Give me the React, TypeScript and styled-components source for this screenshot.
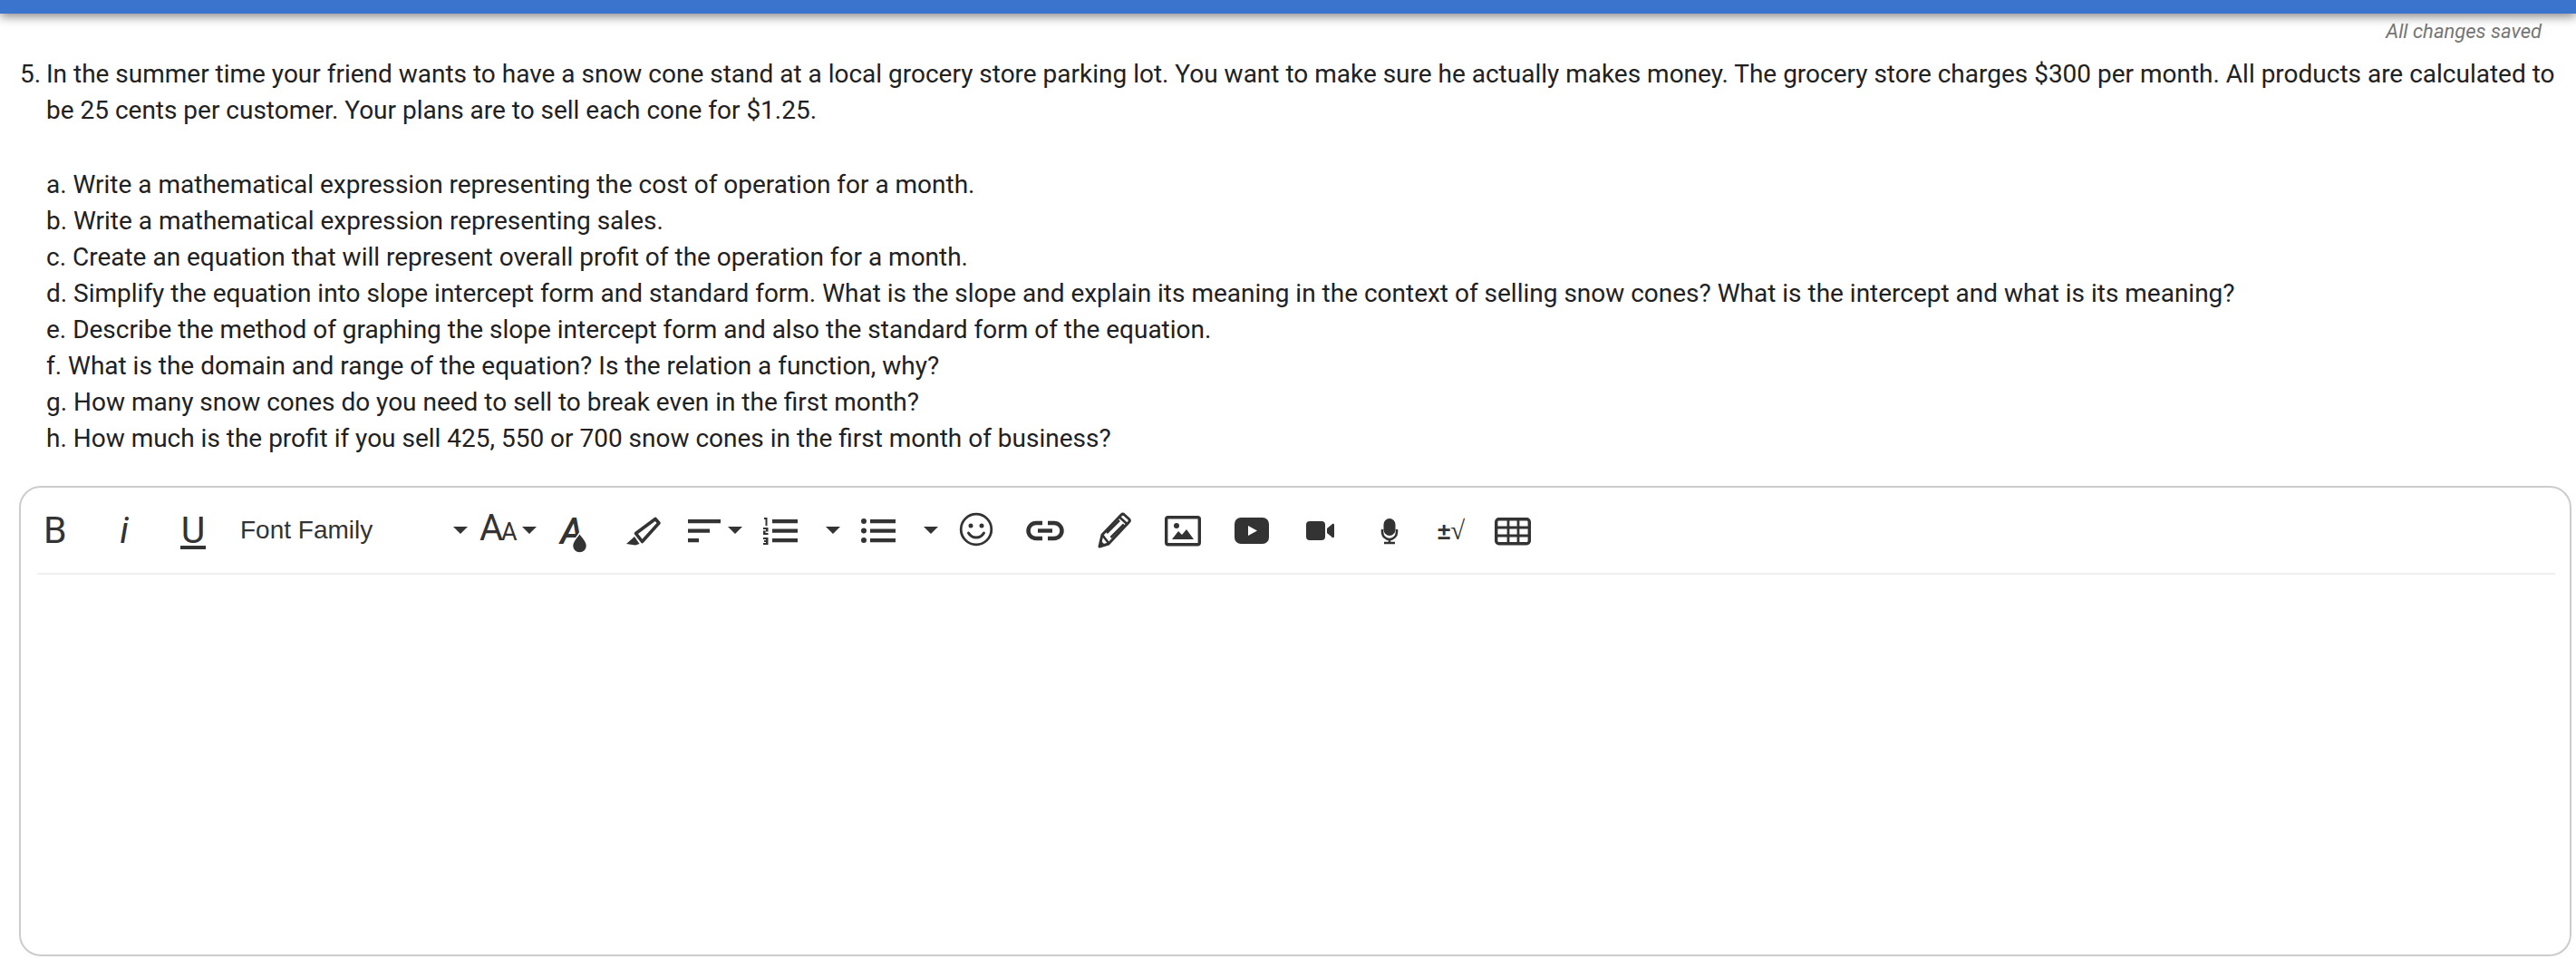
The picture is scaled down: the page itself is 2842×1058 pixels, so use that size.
import React from "react";
import styled, { createGlobalStyle } from "styled-components";

const Global = createGlobalStyle`
  html, body { margin: 0; padding: 0; background: #fff; }
  body { font-family: Roboto, "Liberation Sans", sans-serif; color: #212121; overflow: hidden; }
`;
const Page = styled.div`width: 2842px; height: 1058px; display: flex; flex-direction: column;`;
const TopBar = styled.div`height: 15px; background: #3a74cc; box-shadow: 0 3px 12px rgba(0,0,0,.5); flex: none;`;
const Status = styled.div`
  height: 38px; padding-right: 38px; display: flex; align-items: center; justify-content: flex-end;
  font-size: 22px; font-style: italic; color: #757575;
`;
const Question = styled.div`display: flex; padding-left: 22px; font-size: 27.99px; line-height: 40px; color: #212121; margin-top: 9px;`;
const Num = styled.div`width: 29px; flex: none;`;
const Body = styled.div`width: 2780px;`;
const Para = styled.div`margin-bottom: 42px;`;
const Part = styled.div``;
const Editor = styled.div`
  margin: 32px 5px 0 21px; height: 519px; box-sizing: border-box; flex: none;
  border: 2px solid #ccc; border-radius: 24px; background: #fff;
`;
const Toolbar = styled.div`
  margin: 0 16px 0 18px; height: 96px; box-sizing: border-box; border-bottom: 2px solid #efefef;
  display: flex; align-items: center;
`;
const Tool = styled.div<{ $w: number; $pad?: number; $gap?: number }>`
  width: ${p => p.$w}px; padding-left: ${p => p.$pad ?? 0}px; box-sizing: border-box; flex: none;
  height: 60px; display: flex; align-items: center; gap: ${p => p.$gap ?? 0}px;
  justify-content: ${p => (p.$pad === undefined ? "center" : "flex-start")};
  color: #333;
`;
const Glyph = styled.span<{ $italic?: boolean; $under?: boolean }>`
  position: relative;
  font: ${p => (p.$italic ? "italic" : "normal")} 400 41px/40px Roboto, sans-serif;
  color: #333;
  ${p => p.$under ? `&::after { content: ""; position: absolute; left: -1px; right: -1px; top: 37px; height: 4px; background: #333; }` : ""}
`;
const FontLabel = styled.span`font: 400 28px/40px "Liberation Sans", sans-serif; color: #333; width: 235px; flex: none;`;
const Arrow = styled.span`
  width: 0; height: 0; flex: none; border-left: 8px solid transparent; border-right: 8px solid transparent;
  border-top: 8px solid #333;
`;
const AA = styled.span`display: flex; align-items: baseline; width: 40px; color: #333; font-family: Roboto, sans-serif; line-height: 40px; font-weight: 400;`;
const BigA = styled.span`font-size: 40px; letter-spacing: -2px;`;
const SmallA = styled.span`font-size: 27px; letter-spacing: -1px;`;
const MathSign = styled.span`display: flex; align-items: baseline; color: #333; line-height: 40px;`;
const Pm = styled.span`font: 700 26px/40px "Liberation Sans", sans-serif;`;
const Root = styled.span`font: 400 29px/40px "Liberation Serif", serif;`;
const Svg = styled.svg`width: 40px; height: 40px; flex: none; display: block; overflow: visible; margin-bottom: 4px;`;

const c = "#333";
const Icon: React.FC<{ children: React.ReactNode }> = ({ children }) => (
  <Svg viewBox="0 0 40 40" fill="none">{children}</Svg>
);

const parts = [
  "a. Write a mathematical expression representing the cost of operation for a month.",
  "b. Write a mathematical expression representing sales.",
  "c. Create an equation that will represent overall profit of the operation for a month.",
  "d. Simplify the equation into slope intercept form and standard form. What is the slope and explain its meaning in the context of selling snow cones? What is the intercept and what is its meaning?",
  "e. Describe the method of graphing the slope intercept form and also the standard form of the equation.",
  "f. What is the domain and range of the equation? Is the relation a function, why?",
  "g. How many snow cones do you need to sell to break even in the first month?",
  "h. How much is the profit if you sell 425, 550 or 700 snow cones in the first month of business?",
];

export default function App() {
  return (
    <Page>
      <Global />
      <TopBar />
      <Status>All changes saved</Status>
      <Question>
        <Num>5.</Num>
        <Body>
          <Para>
            In the summer time your friend wants to have a snow cone stand at a local grocery store parking lot. You want to make sure he actually makes money. The grocery store charges $300 per month. All products are calculated to be 25 cents per customer. Your plans are to sell each cone for $1.25.
          </Para>
          {parts.map(t => <Part key={t}>{t}</Part>)}
        </Body>
      </Question>
      <Editor>
        <Toolbar>
          <Tool $w={58} $pad={7}><Glyph>B</Glyph></Tool>
          <Tool $w={76}><Glyph $italic>i</Glyph></Tool>
          <Tool $w={76}><Glyph $under>U</Glyph></Tool>
          <Tool $w={266} $pad={14}><FontLabel>Font Family</FontLabel><Arrow /></Tool>
          <Tool $w={80} $pad={12} $gap={7}><AA><BigA>A</BigA><SmallA>A</SmallA></AA><Arrow /></Tool>
          <Tool $w={74}>
            <Icon>
              <text x="4" y="37" fontFamily="Roboto, sans-serif" fontStyle="italic" fontWeight="500" fontSize="40" fill={c}>A</text>
              <path d="M25.500 25c3 5 8 9 8 14a8 8 0 0 1-16 0c0-5 5-9 8-14z" fill={c} stroke="#fff" strokeWidth="1.500" />
            </Icon>
          </Tool>
          <Tool $w={76}>
            <Icon>
              <path d="M34 9.500l4 4.500-18.500 20.500-7-9z" stroke={c} strokeWidth="3.600" strokeLinejoin="round" />
              <path d="M2 37l9-8 5.500 8-4.500 1.500z" fill={c} />
            </Icon>
          </Tool>
          <Tool $w={83} $pad={10} $gap={6}>
            <Icon>
              <path d="M2 10h36v4.300H2zM2 20.500h24v4.300H2zM2 31h12v4.300H2z" fill={c} />
            </Icon>
            <Arrow />
          </Tool>
          <Tool $w={108} $pad={11} $gap={30}>
            <Icon>
              <path d="M11 10h28v4.300H11zM11 20.500h28v4.300H11zM11 31h28v4.300H11z" fill={c} />
              <path d="M2 8h3.500v9H3.500v-7H2zM1 19h5.500v4.500h-3v1.500h3v2H1v-4.500h3V21H1zM1 30h5.500v8H1v-2h3v-1H2v-2h2v-1H1z" fill={c} />
            </Icon>
            <Arrow />
          </Tool>
          <Tool $w={101} $pad={11} $gap={30}>
            <Icon>
              <path d="M11 10h28v4.300H11zM11 20.500h28v4.300H11zM11 31h28v4.300H11z" fill={c} />
              <circle cx="4" cy="12" r="3" fill={c} /><circle cx="4" cy="22.500" r="3" fill={c} /><circle cx="4" cy="33" r="3" fill={c} />
            </Icon>
            <Arrow />
          </Tool>
          <Tool $w={76}>
            <Icon>
              <circle cx="20" cy="21" r="16.800" stroke={c} strokeWidth="2.800" />
              <circle cx="14" cy="17" r="2.500" fill={c} /><circle cx="26" cy="17" r="2.500" fill={c} />
              <path d="M11.500 25c2 3.500 5 5 8.500 5s6.500-1.500 8.500-5" stroke={c} strokeWidth="3" strokeLinecap="round" />
            </Icon>
          </Tool>
          <Tool $w={76}>
            <Icon>
              <path d="M17 14h-7a8.500 8.500 0 0 0 0 17h7M23 14h7a8.500 8.500 0 0 1 0 17h-7" stroke={c} strokeWidth="4.500" />
              <path d="M12 20.300h16v4.400H12z" fill={c} />
            </Icon>
          </Tool>
          <Tool $w={76}>
            <Icon>
              <path d="M7 27L28 5a2.500 2.500 0 0 1 3.500 0l5 4.500a2.500 2.500 0 0 1 0 3.500L14 37l-10 3z" stroke={c} strokeWidth="3" strokeLinejoin="round" />
              <path d="M12 25L26 11M16.500 30L31 15.500M25 6.500l10.500 9.500M7 27l7 9" stroke={c} strokeWidth="2.600" />
              <path d="M3 41l2-8 6 6z" fill={c} />
            </Icon>
          </Tool>
          <Tool $w={76}>
            <Icon>
              <rect x="1.700" y="7.700" width="36.600" height="30" rx="2" stroke={c} strokeWidth="3.400" />
              <circle cx="13" cy="17" r="3" fill={c} />
              <path d="M8 32l7-9 4 4 5-6 8 11z" fill={c} />
            </Icon>
          </Tool>
          <Tool $w={76}>
            <Icon>
              <rect x="1" y="8" width="38" height="29" rx="7" fill={c} />
              <path d="M16 17l10 5.500-10 5.500z" fill="#fff" />
            </Icon>
          </Tool>
          <Tool $w={76}>
            <Icon>
              <rect x="4" y="12" width="21" height="21" rx="4" fill={c} />
              <path d="M27 20l6-5c1-.5 2 0 2 1v13c0 1-1 1.500-2 1l-6-5z" fill={c} />
            </Icon>
          </Tool>
          <Tool $w={76}>
            <Icon>
              <rect x="13.500" y="9" width="13" height="19" rx="6.500" fill={c} />
              <path d="M12 21v3a8 8 0 0 0 16 0v-3M20 32v4M14 36h12" stroke={c} strokeWidth="2.600" />
            </Icon>
          </Tool>
          <Tool $w={60}><MathSign><Pm>±</Pm><Root>√</Root></MathSign></Tool>
          <Tool $w={76}>
            <Icon>
              <rect x="1.700" y="9.700" width="36.600" height="27" rx="3" stroke={c} strokeWidth="3.400" />
              <path d="M1.700 19h36.600M1.700 28h36.600M15 9.700v27M26 9.700v27" stroke={c} strokeWidth="2.800" />
            </Icon>
          </Tool>
        </Toolbar>
      </Editor>
    </Page>
  );
}
